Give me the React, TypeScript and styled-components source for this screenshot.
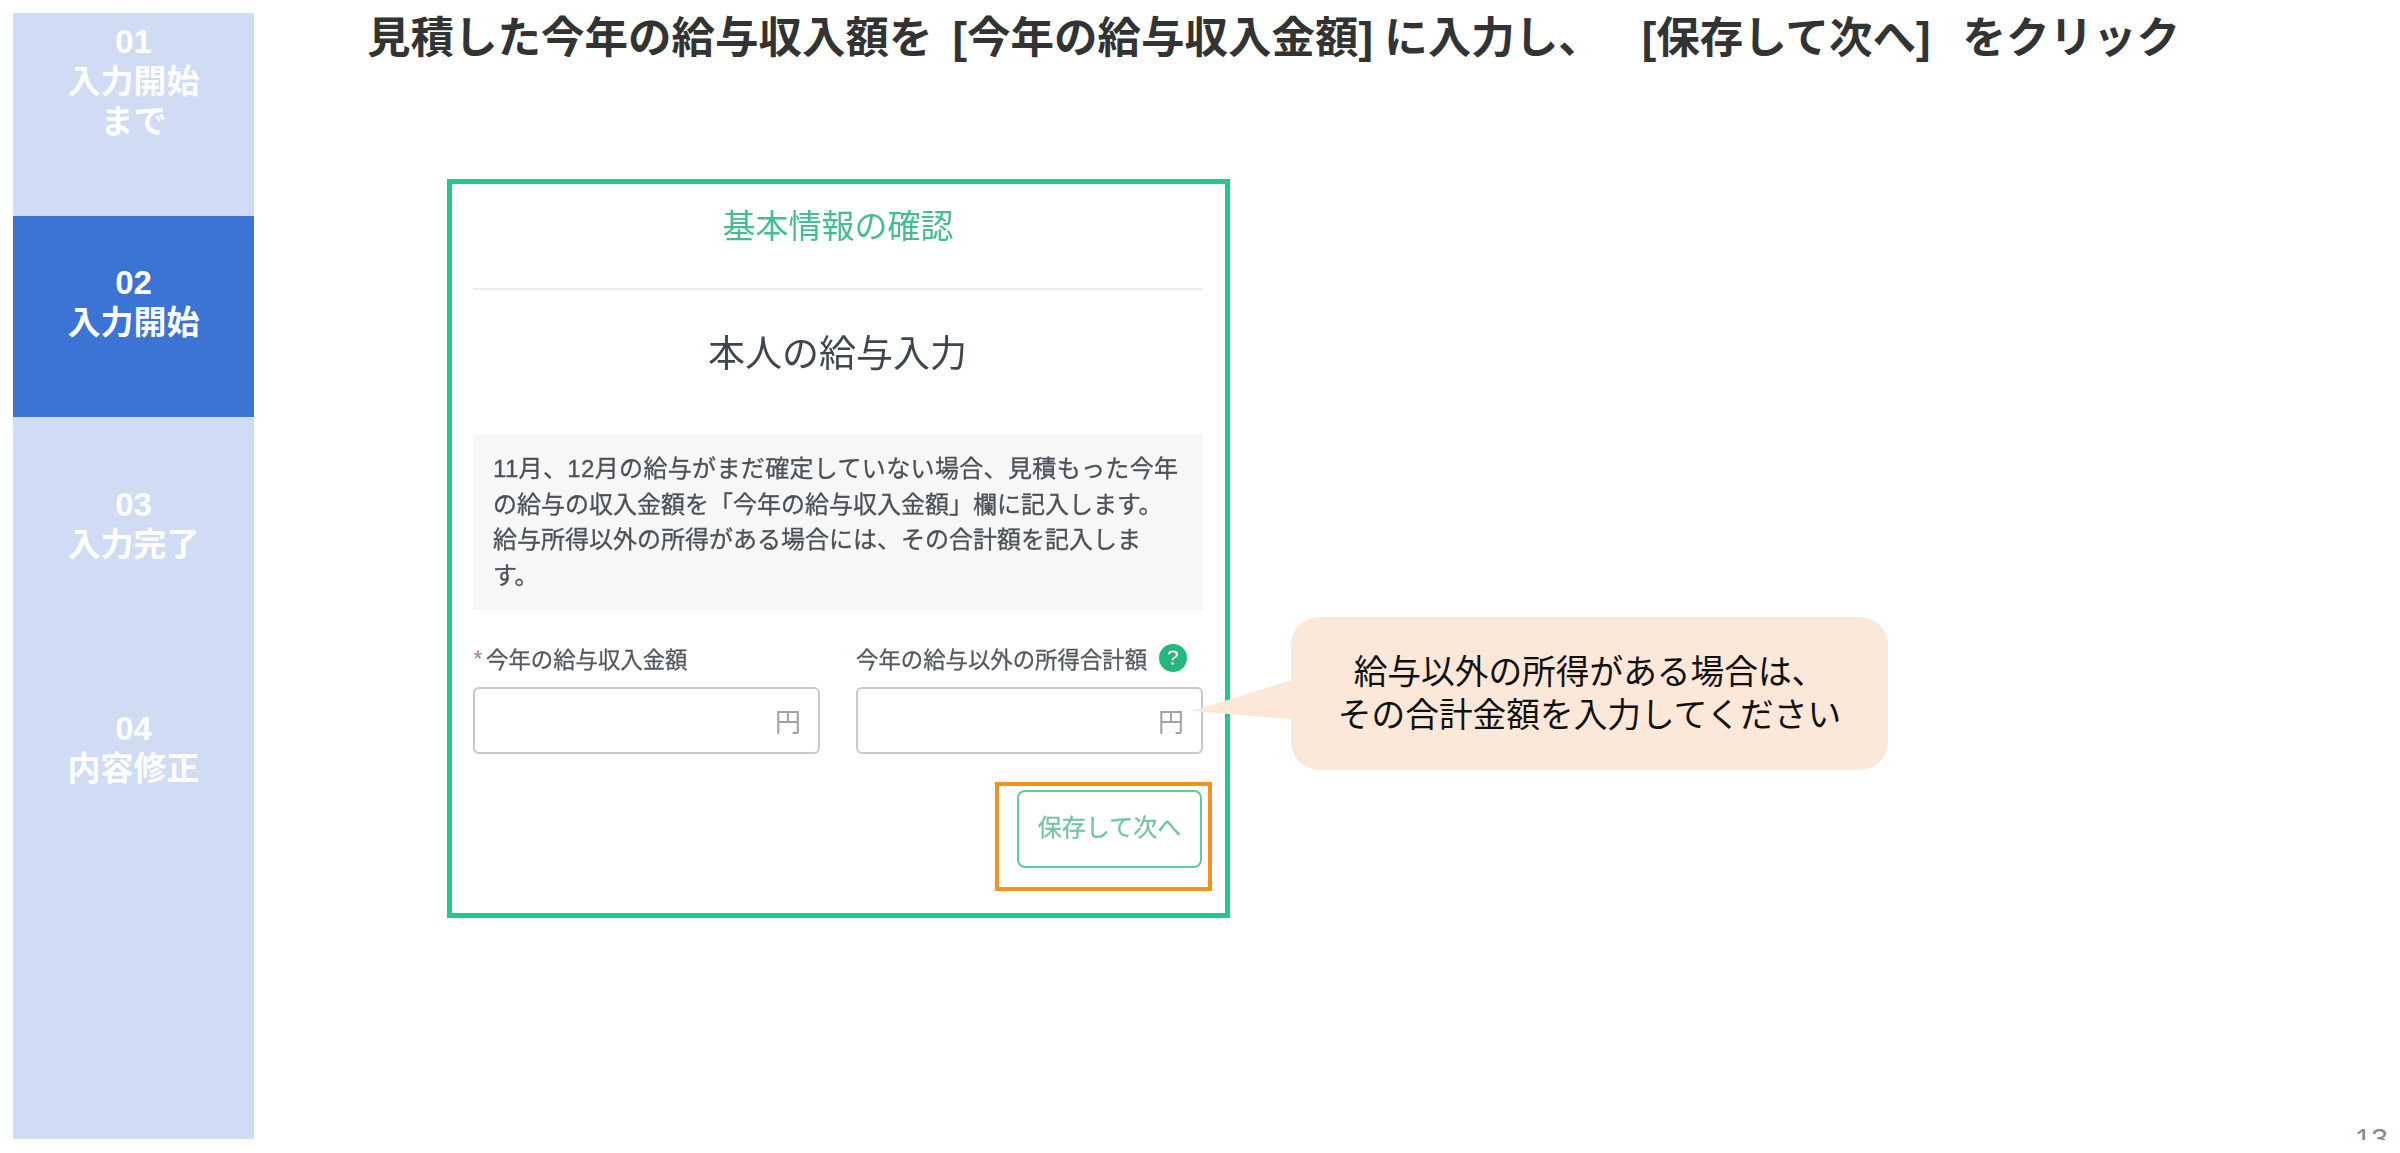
import React from "react";
import styled, { createGlobalStyle } from "styled-components";

const Global = createGlobalStyle`
  html, body { margin: 0; padding: 0; background: #fff; }
  body { font-family: "Liberation Sans", "Noto Sans CJK JP", sans-serif; }
  * { box-sizing: border-box; }
`;

const Page = styled.div`
  display: flex;
  width: 2400px;
  height: 1153px;
  overflow: hidden;
`;

const Sidebar = styled.nav`
  display: flex;
  flex-direction: column;
  flex: none;
  width: 241px;
  height: 1126px;
  margin: 13px 0 0 13px;
  background: #cfdcf3;
`;

const StepItem = styled.div<{ $h: number; $top: number; $active?: boolean }>`
  flex: none;
  height: ${(p) => p.$h}px;
  padding-top: ${(p) => p.$top}px;
  background: ${(p) => (p.$active ? "#3b74d4" : "transparent")};
  color: #fff;
  font-size: 33px;
  font-weight: 700;
  line-height: 40px;
  text-align: center;
`;

const Main = styled.main`
  display: flex;
  flex: 1;
  flex-direction: column;
  min-width: 0;
  padding-bottom: 13px;
`;

const Title = styled.h1`
  flex: none;
  height: 179px;
  margin: 0;
  padding: 13px 0 0 113px;
  color: #333;
  font-size: 43.5px;
  font-weight: 700;
  line-height: 50px;
  white-space: pre;
`;

const TitleGap = styled.span<{ $extra: number }>`
  word-spacing: ${(p) => p.$extra}px;
`;

const ContentRow = styled.div`
  display: flex;
  align-items: flex-start;
  padding-left: 193px;
`;

const Frame = styled.section`
  flex: none;
  width: 783px;
  height: 739px;
  padding: 0 22px 0 21px;
  border: 5px solid #20ca8c;
`;

const FormInner = styled.div`
  filter: blur(0.65px);
`;

const FormTitle = styled.h2`
  height: 106px;
  margin: 0;
  padding-top: 23px;
  border-bottom: 2px solid #eeeeee;
  color: #46bd8e;
  font-size: 33px;
  font-weight: 400;
  line-height: 40px;
  text-align: center;
`;

const PersonHeading = styled.h3`
  margin: 40px 0 0;
  padding-right: 1px;
  color: #3f4650;
  font-size: 37px;
  font-weight: 400;
  line-height: 50px;
  text-align: center;
`;

const Notice = styled.p`
  height: 176px;
  margin: 54px 0 0;
  padding: 17px 0 0 20px;
  background: #f7f7f7;
  color: #4c5157;
  font-size: 24px;
  line-height: 35.5px;
  white-space: nowrap;
  -webkit-text-stroke: 0.3px #4c5157;
`;

const Wide = styled.span`
  letter-spacing: 0.35px;
`;

const FieldRow = styled.div`
  display: grid;
  grid-template-columns: 347px 347px;
  column-gap: 36px;
  margin-top: 33px;
`;

const Field = styled.div`
  display: flex;
  flex-direction: column;
  gap: 14px;
`;

const Label = styled.label`
  display: flex;
  align-items: center;
  height: 30px;
  color: #55595f;
  font-size: 22.4px;
  white-space: nowrap;
  -webkit-text-stroke: 0.3px #55595f;
`;

const Required = styled.span`
  width: 13px;
  padding-left: 1px;
  color: #ef8a8a;
  font-size: 20px;
`;

const HelpIcon = styled.span`
  display: flex;
  flex: none;
  align-items: center;
  justify-content: center;
  width: 28px;
  height: 28px;
  margin-left: 12px;
  border-radius: 50%;
  background: #21b97e;
  color: #d8f3e8;
  font-size: 22px;
  font-weight: 700;
`;

const InputBox = styled.div`
  display: flex;
  align-items: center;
  justify-content: flex-end;
  height: 67px;
  padding-right: 17px;
  border: 2px solid #c9c9c9;
  border-radius: 6px;
  color: #a2a2a2;
  font-size: 26px;
`;

const ActionRow = styled.div`
  display: flex;
  justify-content: flex-end;
  margin: 28px -9px 0 0;
`;

const Highlight = styled.div`
  width: 217px;
  height: 109px;
  padding: 4px 0 0 18px;
  border: 4px solid #f5911e;
`;

const SaveButton = styled.button`
  width: 185px;
  height: 78px;
  padding: 0 0 7px;
  border: 2px solid #62c9a8;
  border-radius: 8px;
  background: #fff;
  color: #74c4a6;
  font-family: inherit;
  font-size: 24px;
  -webkit-text-stroke: 0.3px #74c4a6;
`;

const Balloon = styled.aside`
  position: relative;
  flex: none;
  width: 597px;
  height: 153px;
  margin: 438px 0 0 61px;
  padding-top: 34px;
  border-radius: 28px;
  background: #fbe8d9;
  color: #111;
  font-size: 33.7px;
  line-height: 43px;
  text-align: center;
  white-space: nowrap;
`;

const Tail = styled.svg`
  position: absolute;
  top: 60px;
  left: -100px;
  width: 101px;
  height: 45px;
`;

const Footer = styled.footer`
  display: flex;
  justify-content: flex-end;
  height: 12px;
  margin-top: auto;
  padding-right: 12px;
  overflow: hidden;
  color: #8a8a8a;
  font-size: 30px;
  line-height: 21px;
`;

export default function App() {
  return (
    <Page>
      <Global />
      <Sidebar>
        <StepItem $h={203} $top={9}>01<br />入力開始<br />まで</StepItem>
        <StepItem $h={201} $top={47} $active>02<br />入力開始</StepItem>
        <StepItem $h={224} $top={68}>03<br />入力完了</StepItem>
        <StepItem $h={224} $top={68}>04<br />内容修正</StepItem>
      </Sidebar>
      <Main>
        <Title>
          見積した今年の給与収入額を<TitleGap $extra={8}> </TitleGap>[今年の給与収入金額]<TitleGap $extra={-1}> </TitleGap>に入力し、<TitleGap $extra={28}> </TitleGap>[保存して次へ]<TitleGap $extra={20}> </TitleGap>をクリック
        </Title>
        <ContentRow>
          <Frame>
            <FormInner>
              <FormTitle>基本情報の確認</FormTitle>
              <PersonHeading>本人の給与入力</PersonHeading>
              <Notice>
                <Wide>11月、12月の給与がまだ確定していない場合、見積もった今年</Wide><br />
                の給与の収入金額を「今年の給与収入金額」欄に記入します。<br />
                給与所得以外の所得がある場合には、その合計額を記入しま<br />
                す。
              </Notice>
              <FieldRow>
                <Field>
                  <Label><Required>*</Required>今年の給与収入金額</Label>
                  <InputBox>円</InputBox>
                </Field>
                <Field>
                  <Label>今年の給与以外の所得合計額<HelpIcon>?</HelpIcon></Label>
                  <InputBox>円</InputBox>
                </Field>
              </FieldRow>
              <ActionRow>
                <Highlight>
                  <SaveButton>保存して次へ</SaveButton>
                </Highlight>
              </ActionRow>
            </FormInner>
          </Frame>
          <Balloon>
            <Tail viewBox="0 0 101 45">
              <polygon points="1,34 101,3 101,42" fill="#fbe8d9" />
            </Tail>
            給与以外の所得がある場合は、<br />その合計金額を入力してください
          </Balloon>
        </ContentRow>
        <Footer>13</Footer>
      </Main>
    </Page>
  );
}
